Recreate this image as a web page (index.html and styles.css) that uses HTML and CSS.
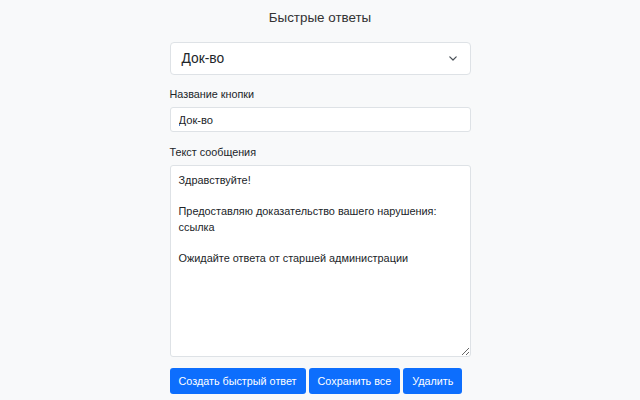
FILE: index.html
```html
<!DOCTYPE html>
<html lang="ru">
<head>
<meta charset="UTF-8">
<meta name="viewport" content="width=device-width, initial-scale=1.0">
<link rel="stylesheet" href="styles.css">
</head>
<body>
    <div class="container">
        <h1 class="title">Быстрые ответы</h1>

        <div class="select-box">
            <span class="select-value">Док-во</span>
            <svg class="chevron" width="10" height="7" viewBox="0 0 10 7">
                <path d="M1.8 1.8 L5 5 L8.2 1.8" fill="none" stroke="#495057" stroke-width="1.2" stroke-linecap="round" stroke-linejoin="round"/>
            </svg>
        </div>

        <label class="label">Название кнопки</label>
        <input class="input" type="text" value="Док-во">

        <label class="label label-second">Текст сообщения</label>
        <textarea class="textarea">Здравствуйте!

Предоставляю доказательство вашего нарушения:
ссылка

Ожидайте ответа от старшей администрации</textarea>

        <div class="buttons">
            <button class="button">Создать быстрый ответ</button>
            <button class="button">Сохранить все</button>
            <button class="button">Удалить</button>
        </div>
    </div>
</body>
</html>
```

FILE: styles.css
```css
body, html {
    margin: 0;
    padding: 0;
    font-family: "Liberation Sans", Arial, sans-serif;
    background-color: #f8f9fa;
    color: #212529;
}

.container {
    width: 301px;
    margin: 0 auto;
    display: flex;
    flex-direction: column;
}

.title {
    margin: 8px 0 14px;
    font-size: 13.4px;
    line-height: 20px;
    font-weight: normal;
    text-align: center;
    color: #333;
}

/* Select */
.select-box {
    height: 33px;
    box-sizing: border-box;
    display: flex;
    align-items: center;
    justify-content: space-between;
    padding: 0 11px;
    background-color: #fff;
    border: 1px solid #dee2e6;
    border-radius: 4px;
    font-size: 13.8px;
}

.chevron {
    margin-right: 1px;
}

/* Fields */
.label {
    margin-top: 11px;
    font-size: 10.8px;
    line-height: 16px;
    color: #212529;
}

.label-second {
    margin-top: 12px;
}

.input {
    margin-top: 5px;
    height: 25px;
    box-sizing: border-box;
    padding: 0 8px;
    font-family: inherit;
    font-size: 11.2px;
    color: #212529;
    background-color: #fff;
    border: 1px solid #dee2e6;
    border-radius: 3px;
}

.textarea {
    margin-top: 5px;
    height: 192px;
    box-sizing: border-box;
    padding: 7px 8px;
    font-family: inherit;
    font-size: 10.9px;
    line-height: 15.5px;
    color: #212529;
    background-color: #fff;
    border: 1px solid #dee2e6;
    border-radius: 3px;
    resize: vertical;
}

/* Buttons */
.buttons {
    display: flex;
    gap: 3px;
    margin-top: 11px;
}

.button {
    height: 26px;
    padding: 0 9px;
    white-space: nowrap;
    font-family: inherit;
    font-size: 10.8px;
    color: #fff;
    background-color: #0d6efd;
    border: none;
    border-radius: 3px;
    cursor: pointer;
}
```
